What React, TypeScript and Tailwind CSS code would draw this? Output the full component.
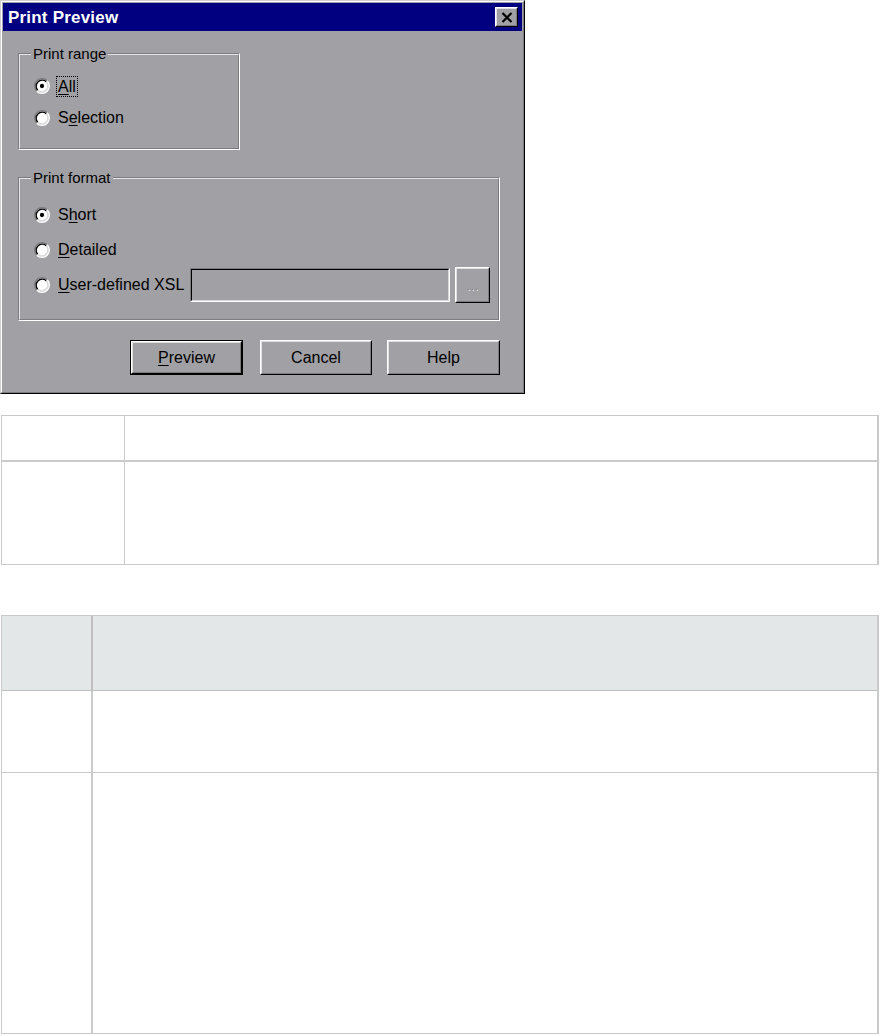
import React from "react";

function Radio({ checked }: { checked?: boolean }) {
  return (
    <svg width="16" height="16" viewBox="0 0 12 12" className="shrink-0">
      <circle cx="6" cy="6" r="5" fill="#ffffff" />
      <path d="M2.11 9.89 A5.5 5.5 0 0 1 9.89 2.11" fill="none" stroke="#7c7b80" strokeWidth="1" />
      <path d="M9.89 2.11 A5.5 5.5 0 0 1 2.11 9.89" fill="none" stroke="#ffffff" strokeWidth="1" />
      <path d="M2.82 9.18 A4.5 4.5 0 0 1 9.18 2.82" fill="none" stroke="#000000" strokeWidth="1" />
      <path d="M9.18 2.82 A4.5 4.5 0 0 1 2.82 9.18" fill="none" stroke="#d8d8da" strokeWidth="1" />
      {checked && <circle cx="6" cy="6" r="1.6" fill="#000000" />}
    </svg>
  );
}

function GroupBox({
  label,
  className,
  children,
}: {
  label: string;
  className: string;
  children: React.ReactNode;
}) {
  return (
    <div className={"relative border border-t-[#7c7b80] border-l-[#7c7b80] border-r-[#ffffff] border-b-[#ffffff] " + className}>
      <div className="h-full w-full border border-t-[#e6e6e8] border-l-[#e6e6e8] border-r-[#7c7b80] border-b-[#7c7b80]">
        {children}
      </div>
      <span className="absolute left-[12px] top-[-9px] bg-[#a1a0a5] px-[2px] text-[15px] leading-[18px] text-black">
        {label}
      </span>
    </div>
  );
}

function Btn({
  children,
  isDefault,
  w,
}: {
  children: React.ReactNode;
  isDefault?: boolean;
  w: string;
}) {
  if (isDefault) {
    return (
      <div className={"h-[35px] border border-black " + w}>
        <div className="h-full w-full border border-t-[#ffffff] border-l-[#ffffff] border-r-black border-b-black">
          <div className="flex h-full w-full items-center justify-center border border-t-[#e0e0e2] border-l-[#e0e0e2] border-r-[#7c7b80] border-b-[#7c7b80] text-[16px] text-black">
            {children}
          </div>
        </div>
      </div>
    );
  }
  return (
    <div className={"h-[35px] border border-t-[#ffffff] border-l-[#ffffff] border-r-black border-b-black " + w}>
      <div className="flex h-full w-full items-center justify-center border border-t-[#e0e0e2] border-l-[#e0e0e2] border-r-[#7c7b80] border-b-[#7c7b80] text-[16px] text-black">
        {children}
      </div>
    </div>
  );
}

function Dialog() {
  return (
    <div className="h-[394px] w-[525px] border border-t-[#d0d0d2] border-l-[#d0d0d2] border-r-black border-b-black bg-[#a1a0a5]">
      <div className="flex h-full w-full flex-col border border-t-[#ffffff] border-l-[#ffffff] border-r-[#7c7b80] border-b-[#7c7b80] p-[1px]">
        {/* Title bar */}
        <div className="flex h-[28px] items-center justify-between bg-[#000080] pl-[5px] pr-[4px]">
          <span className="text-[17px] font-bold leading-none tracking-[0.2px] text-white">Print Preview</span>
          <div className="h-[20px] w-[23px] border border-t-[#ffffff] border-l-[#ffffff] border-r-black border-b-black bg-[#a1a0a5]">
            <div className="flex h-full w-full items-center justify-center border border-t-[#e0e0e2] border-l-[#e0e0e2] border-r-[#7c7b80] border-b-[#7c7b80]">
              <svg width="12" height="11" viewBox="0 0 12 11">
                <path d="M1.5 1 L10.5 10 M10.5 1 L1.5 10" stroke="#000" strokeWidth="2.2" />
              </svg>
            </div>
          </div>
        </div>

        {/* Body */}
        <div className="flex flex-col pl-[15px] pt-[22px]">
          <GroupBox label="Print range" className="h-[97px] w-[222px]">
            <div className="flex flex-col pl-[14px] pt-[15px]">
              <div className="flex h-[32px] items-center gap-[6px]">
                <Radio checked />
                <span className="border border-dotted border-black px-[1px] text-[16px] leading-[19px] text-black">
                  <span className="underline underline-offset-2">A</span>ll
                </span>
              </div>
              <div className="flex h-[32px] items-center gap-[8px]">
                <Radio />
                <span className="text-[16px] leading-[20px] text-black">
                  S<span className="underline underline-offset-2">e</span>lection
                </span>
              </div>
            </div>
          </GroupBox>

          <GroupBox label="Print format" className="mt-[27px] h-[144px] w-[482px]">
            <div className="flex flex-col pl-[14px] pt-[18px]">
              <div className="flex h-[35px] items-center gap-[8px]">
                <Radio checked />
                <span className="text-[16px] leading-[20px] text-black">
                  S<span className="underline underline-offset-2">h</span>ort
                </span>
              </div>
              <div className="flex h-[35px] items-center gap-[8px]">
                <Radio />
                <span className="text-[16px] leading-[20px] text-black">
                  <span className="underline underline-offset-2">D</span>etailed
                </span>
              </div>
              <div className="flex h-[35px] items-center">
                <Radio />
                <span className="ml-[8px] text-[16px] leading-[20px] text-black">
                  <span className="underline underline-offset-2">U</span>ser-defined XSL
                </span>
                <div className="ml-[6px] h-[34px] w-[260px] border border-t-[#7c7b80] border-l-[#7c7b80] border-r-[#ffffff] border-b-[#ffffff]">
                  <div className="h-full w-full border border-t-black border-l-black border-r-[#d8d8da] border-b-[#d8d8da] bg-[#a1a0a5]" />
                </div>
                <div className="ml-[5px] h-[36px] w-[35px] border border-t-[#ffffff] border-l-[#ffffff] border-r-black border-b-black">
                  <div className="flex h-full w-full items-end justify-center border border-t-[#e0e0e2] border-l-[#e0e0e2] border-r-[#7c7b80] border-b-[#7c7b80] pb-[9px]">
                    <span className="text-[11px] leading-none tracking-[1px] text-[#7c7b80] [text-shadow:1px_1px_0_#e8e8ea]">...</span>
                  </div>
                </div>
              </div>
            </div>
          </GroupBox>

          <div className="mt-[19px] flex w-[482px] justify-end">
            <Btn isDefault w="w-[113px]">
              <span>
                <span className="underline underline-offset-2">P</span>review
              </span>
            </Btn>
            <div className="w-[17px]" />
            <Btn w="w-[112px]">Cancel</Btn>
            <div className="w-[15px]" />
            <Btn w="w-[113px]">Help</Btn>
          </div>
        </div>
      </div>
    </div>
  );
}

export default function App() {
  return (
    <div className="min-h-[1036px] w-[880px] bg-white font-['Liberation_Sans',Arial,sans-serif]">
      <Dialog />

      <div className="ml-[1px] mt-[21px] w-[878px] border-t border-l border-b border-r-2 border-[#cacaca]">
        <div className="grid grid-cols-[123px_1fr]">
          <div className="h-[46px] border-r border-b-2 border-[#cacaca]" />
          <div className="h-[46px] border-b-2 border-[#cacaca]" />
          <div className="h-[102px] border-r border-[#cacaca]" />
          <div className="h-[102px]" />
        </div>
      </div>

      <div className="ml-[1px] mt-[50px] w-[878px] border-t border-l border-b border-r-2 border-[#cacaca]">
        <div className="grid grid-cols-[91px_1fr]">
          <div className="h-[75px] border-r-2 border-b border-[#bfbfc0] bg-[#e3e7e8]" />
          <div className="h-[75px] border-b border-[#bfbfc0] bg-[#e3e7e8]" />
          <div className="h-[82px] border-r-2 border-b border-[#cacaca]" />
          <div className="h-[82px] border-b border-[#cacaca]" />
          <div className="h-[260px] border-r-2 border-[#cacaca]" />
          <div className="h-[260px]" />
        </div>
      </div>
    </div>
  );
}
